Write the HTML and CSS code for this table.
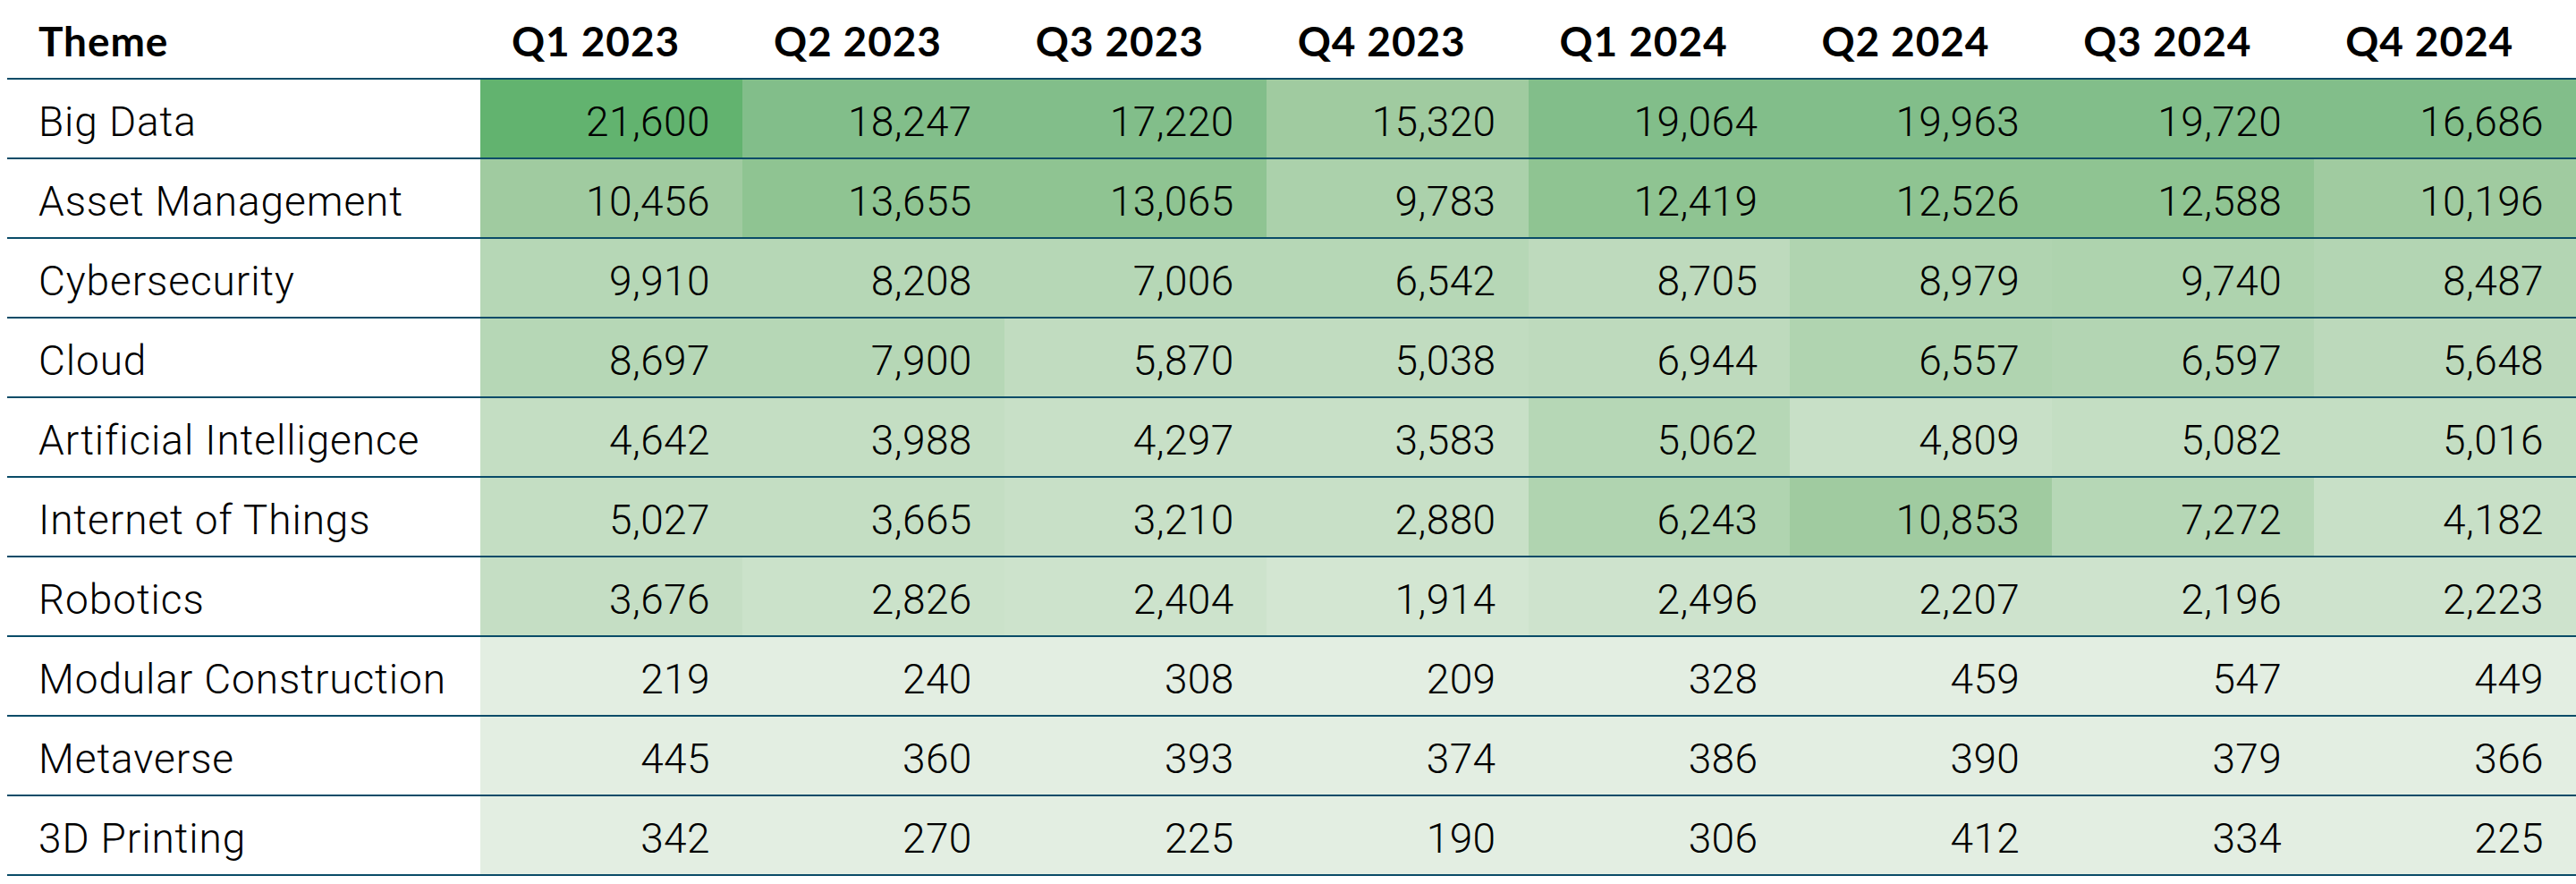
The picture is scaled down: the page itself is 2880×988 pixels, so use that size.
FILE: index.html
```html
<!DOCTYPE html>
<html lang="en">
<head>
<meta charset="utf-8">
<title>Theme mentions by quarter</title>
<link rel="stylesheet" href="styles.css">
</head>
<body>
<table class="grid">
  <colgroup><col class="col-theme"><col span="8"></colgroup>
  <thead>
    <tr>
      <th class="h-theme">Theme</th>
      <th>Q1 2023</th><th>Q2 2023</th><th>Q3 2023</th><th>Q4 2023</th>
      <th>Q1 2024</th><th>Q2 2024</th><th>Q3 2024</th><th>Q4 2024</th>
    </tr>
  </thead>
  <tbody>
    <tr><td class="name">Big Data</td>
      <td style="background:#62b36f">21,600</td><td style="background:#82be8a">18,247</td><td style="background:#82be8a">17,220</td><td style="background:#a0cba0">15,320</td>
      <td style="background:#82be8a">19,064</td><td style="background:#82be8a">19,963</td><td style="background:#82be8a">19,720</td><td style="background:#82be8a">16,686</td></tr>
    <tr><td class="name">Asset Management</td>
      <td style="background:#a0cba0">10,456</td><td style="background:#8fc492">13,655</td><td style="background:#8fc492">13,065</td><td style="background:#abd1ab">9,783</td>
      <td style="background:#8fc492">12,419</td><td style="background:#8fc492">12,526</td><td style="background:#8fc492">12,588</td><td style="background:#a0cba0">10,196</td></tr>
    <tr><td class="name">Cybersecurity</td>
      <td style="background:#b6d7b6">9,910</td><td style="background:#b6d7b6">8,208</td><td style="background:#b6d7b6">7,006</td><td style="background:#b6d7b6">6,542</td>
      <td style="background:#bedabd">8,705</td><td style="background:#b0d4b0">8,979</td><td style="background:#aed3ae">9,740</td><td style="background:#b3d5b3">8,487</td></tr>
    <tr><td class="name">Cloud</td>
      <td style="background:#b6d7b6">8,697</td><td style="background:#b6d7b6">7,900</td><td style="background:#c1dcc0">5,870</td><td style="background:#c1dcc0">5,038</td>
      <td style="background:#bedabd">6,944</td><td style="background:#b0d4b0">6,557</td><td style="background:#b3d5b3">6,597</td><td style="background:#bcd9bb">5,648</td></tr>
    <tr><td class="name">Artificial Intelligence</td>
      <td style="background:#c4dec3">4,642</td><td style="background:#c4dec3">3,988</td><td style="background:#c8e0c7">4,297</td><td style="background:#c8e0c7">3,583</td>
      <td style="background:#b6d7b6">5,062</td><td style="background:#c8e0c7">4,809</td><td style="background:#c4dec3">5,082</td><td style="background:#c4dec3">5,016</td></tr>
    <tr><td class="name">Internet of Things</td>
      <td style="background:#c4dec3">5,027</td><td style="background:#c4dec3">3,665</td><td style="background:#c8e0c7">3,210</td><td style="background:#c8e0c7">2,880</td>
      <td style="background:#b0d4b0">6,243</td><td style="background:#a0cba0">10,853</td><td style="background:#b6d7b6">7,272</td><td style="background:#c8e0c7">4,182</td></tr>
    <tr><td class="name">Robotics</td>
      <td style="background:#c5dec4">3,676</td><td style="background:#cbe2ca">2,826</td><td style="background:#cde3cc">2,404</td><td style="background:#d3e6d2">1,914</td>
      <td style="background:#cee3cd">2,496</td><td style="background:#cee3cd">2,207</td><td style="background:#cee3cd">2,196</td><td style="background:#cee3cd">2,223</td></tr>
    <tr><td class="name">Modular Construction</td>
      <td style="background:#e3eee2">219</td><td style="background:#e3eee2">240</td><td style="background:#e3eee2">308</td><td style="background:#e3eee2">209</td>
      <td style="background:#e3eee2">328</td><td style="background:#e3eee2">459</td><td style="background:#e3eee2">547</td><td style="background:#e3eee2">449</td></tr>
    <tr><td class="name">Metaverse</td>
      <td style="background:#e3eee2">445</td><td style="background:#e3eee2">360</td><td style="background:#e3eee2">393</td><td style="background:#e3eee2">374</td>
      <td style="background:#e3eee2">386</td><td style="background:#e3eee2">390</td><td style="background:#e3eee2">379</td><td style="background:#e3eee2">366</td></tr>
    <tr><td class="name">3D Printing</td>
      <td style="background:#e3eee2">342</td><td style="background:#e3eee2">270</td><td style="background:#e3eee2">225</td><td style="background:#e3eee2">190</td>
      <td style="background:#e3eee2">306</td><td style="background:#e3eee2">412</td><td style="background:#e3eee2">334</td><td style="background:#e3eee2">225</td></tr>
  </tbody>
</table>
</body>
</html>
```
FILE: styles.css
```css
html, body {
  margin: 0;
  background: #ffffff;
}
body {
  padding: 8px 0 0 8px;
  color: #000000;
}
.grid {
  width: 100%;
  table-layout: fixed;
  border-collapse: separate;
  border-spacing: 0;
}
.col-theme {
  width: 529px;
}
.grid th {
  font-family: "Lato", "Liberation Sans", sans-serif;
  font-weight: 700;
  font-size: 46px;
  letter-spacing: 0.9px;
  line-height: 56px;
  text-align: left;
  padding: 10px 0 13px 35px;
  height: 56px;
  vertical-align: top;
  border-bottom: 2px solid #0a4c68;
  white-space: nowrap;
}
.grid td {
  font-family: "Roboto", "Liberation Sans", sans-serif;
  font-weight: 300;
  font-size: 46px;
  letter-spacing: 0.4px;
  line-height: 54px;
  height: 54px;
  padding: 20px 36px 13px 0;
  text-align: right;
  vertical-align: top;
  border-bottom: 2px solid #0a4c68;
  white-space: nowrap;
}
.grid td.name {
  text-align: left;
  letter-spacing: 0.9px;
  padding-left: 35px;
  padding-right: 0;
  background: #ffffff;
}
```
